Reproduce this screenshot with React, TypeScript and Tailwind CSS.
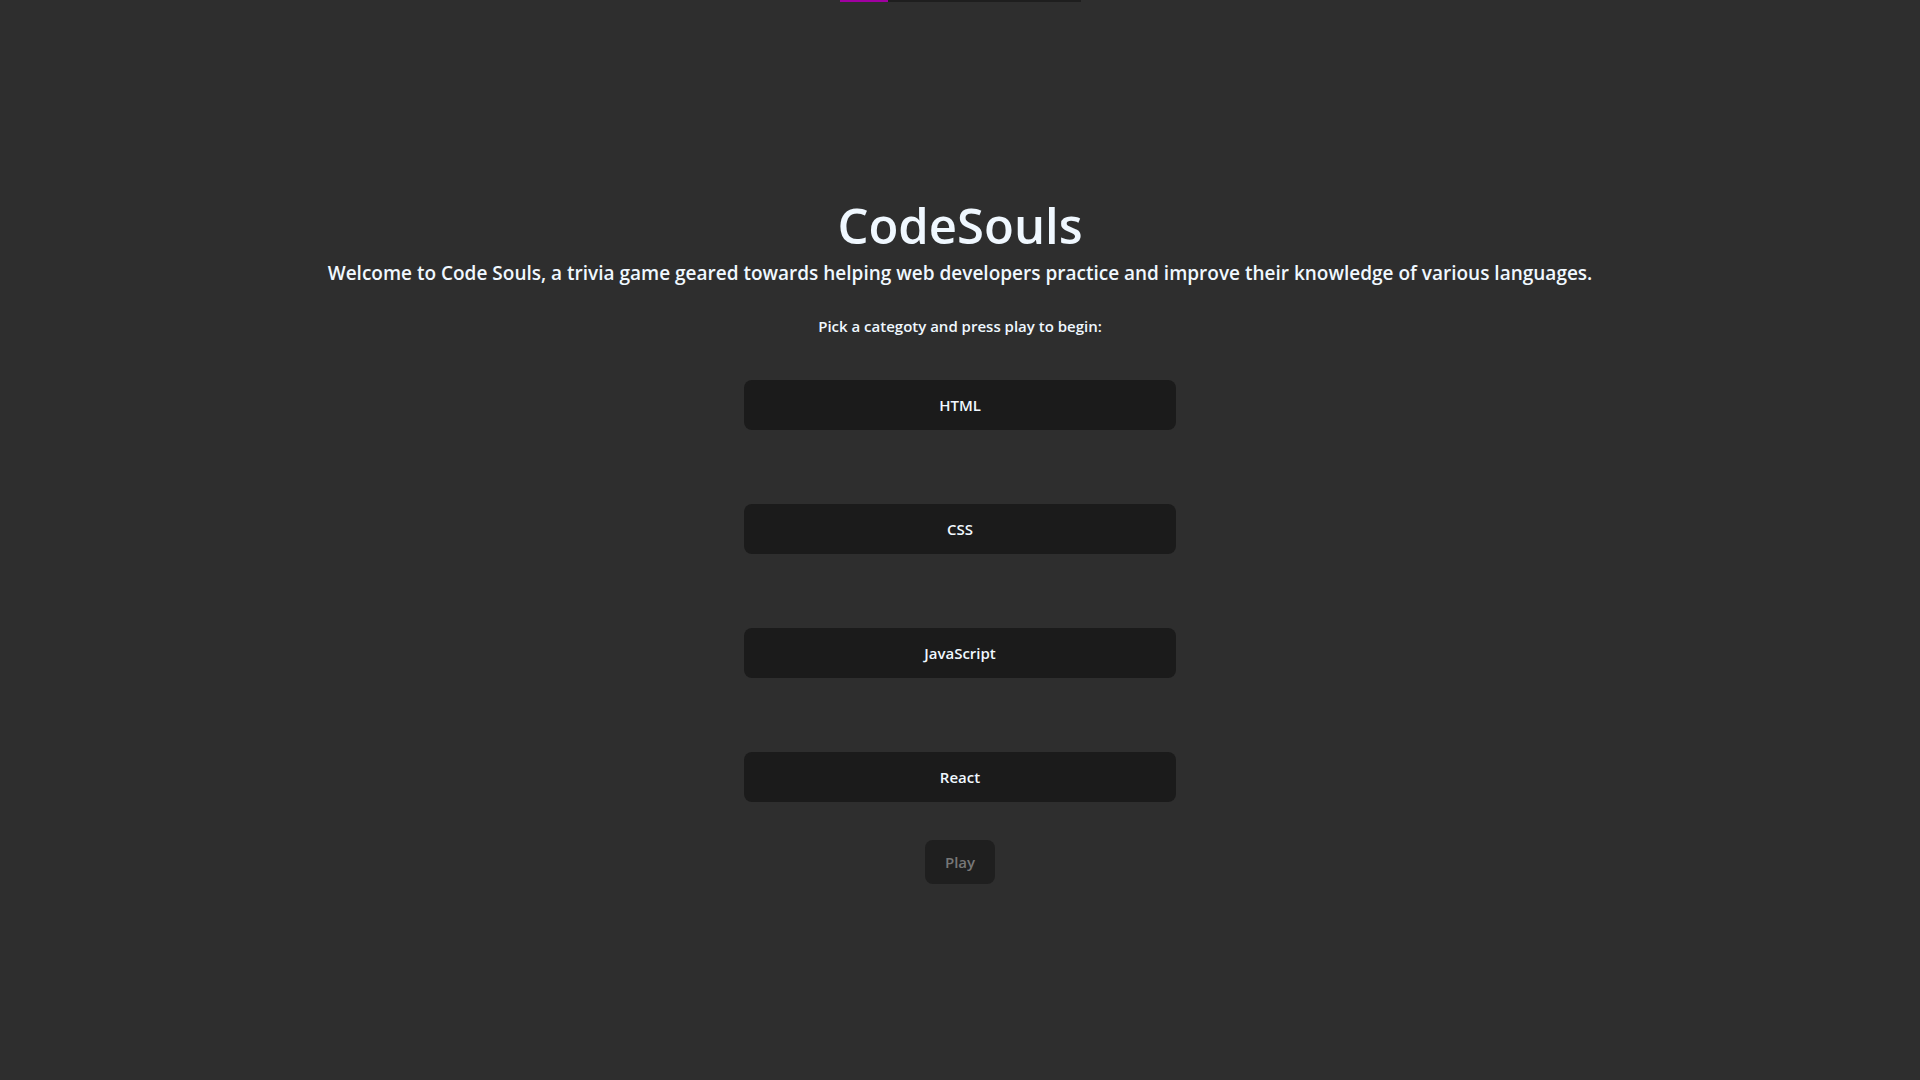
const categories = ["HTML", "CSS", "JavaScript", "React"];

export default function App() {
  return (
    <div className="min-h-screen bg-[#2e2e2e] text-[#f0f8ff] font-['Open_Sans',sans-serif]">
      <div className="flex justify-center">
        <div className="flex w-[241px] h-[2px] bg-[#1e1e1e]">
          <div className="w-[48px] h-full bg-[#a000a0]" />
        </div>
      </div>

      <div className="flex flex-col items-center pt-[188px]">
        <h1 className="text-[49px] font-semibold leading-[70px]">CodeSouls</h1>
        <p className="text-[19px] font-semibold leading-[26px]">
          Welcome to Code Souls, a trivia game geared towards helping web developers practice and improve their
          knowledge of various languages.
        </p>
        <p className="mt-[30px] text-[15px] font-semibold leading-[20px]">Pick a categoty and press play to begin:</p>

        <div className="mt-[44px] flex flex-col gap-[74px]">
          {categories.map((c) => (
            <button
              key={c}
              className="w-[432px] h-[50px] rounded-lg bg-[#1b1b1b] text-[15px] font-semibold text-[#f0f8ff]"
            >
              {c}
            </button>
          ))}
        </div>

        <button
          disabled
          className="mt-[38px] w-[70px] h-[44px] rounded-lg bg-[#1f1f1f] text-[15px] font-semibold text-[#777]"
        >
          Play
        </button>
      </div>
    </div>
  );
}
